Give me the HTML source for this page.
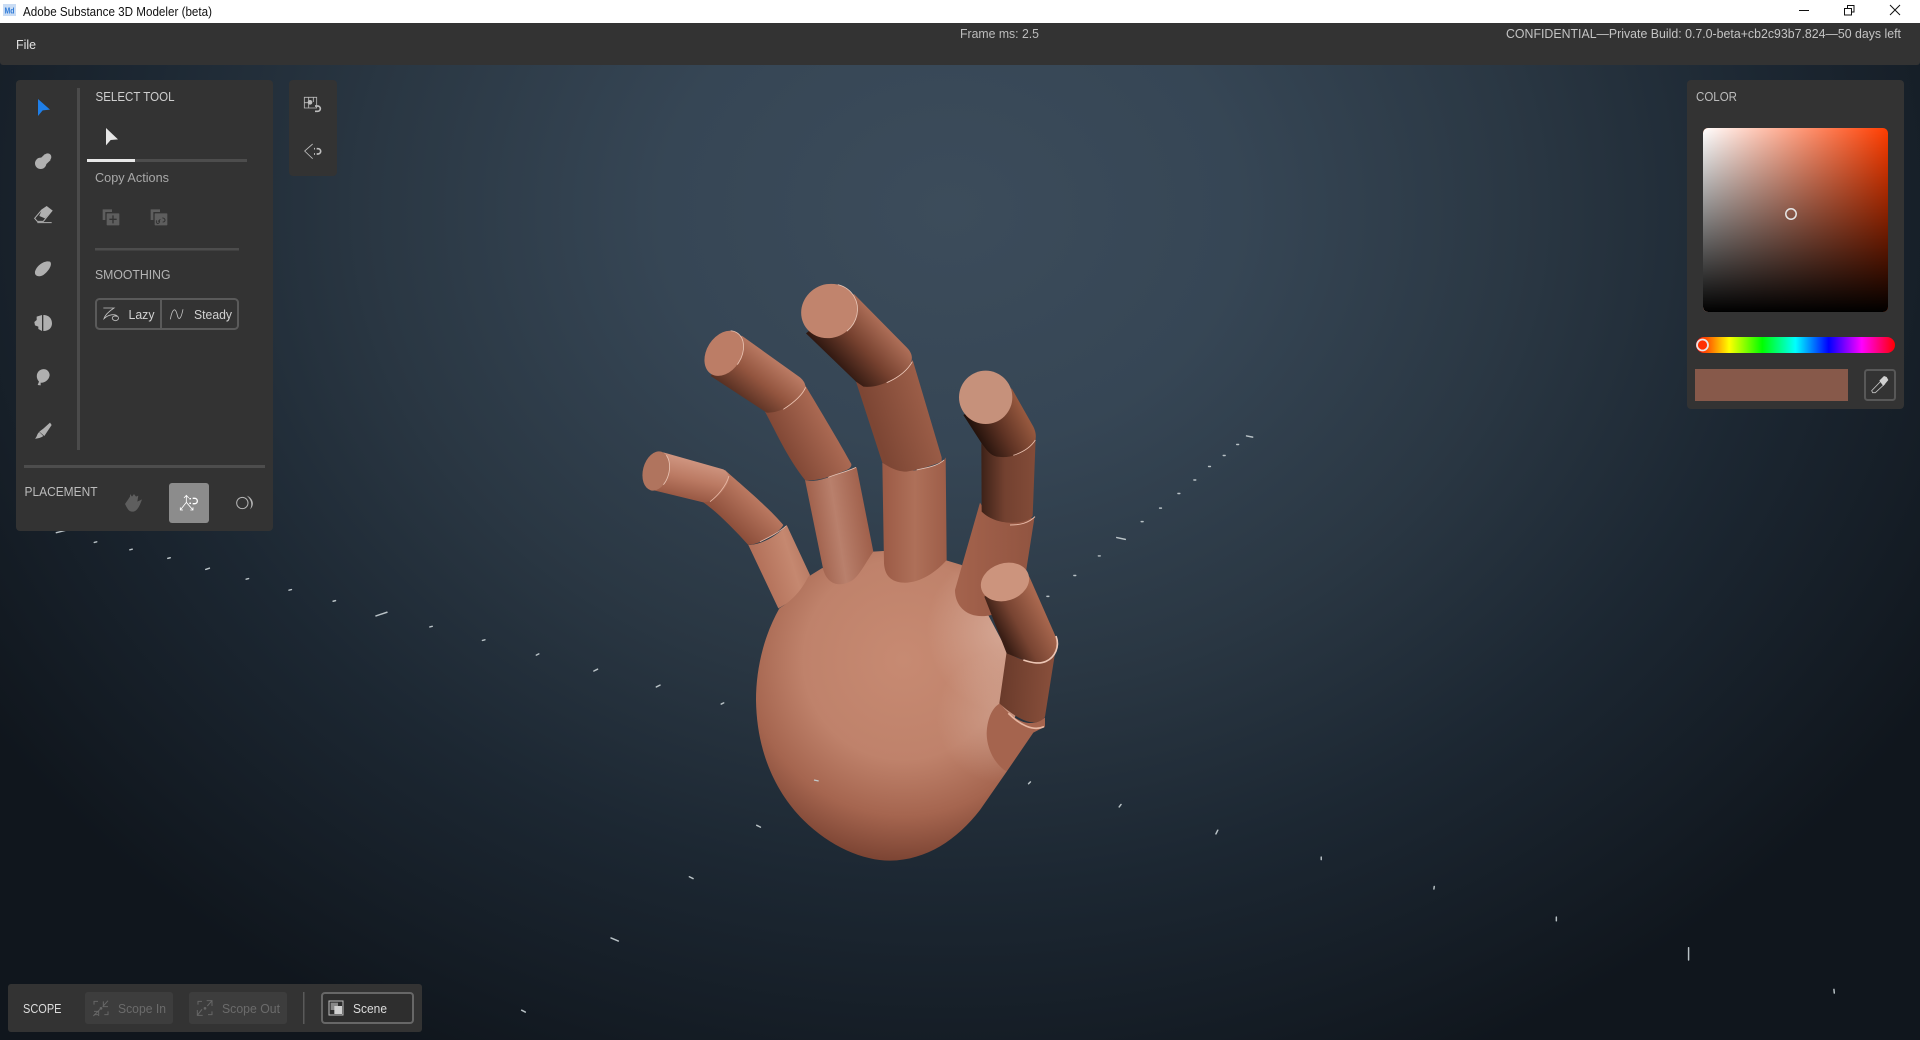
<!DOCTYPE html>
<html lang="en"><head><meta charset="utf-8"><title>Adobe Substance 3D Modeler (beta)</title>
<style>
html,body{margin:0;padding:0;background:#111;overflow:hidden}
svg{display:block}
text{font-family:"Liberation Sans",sans-serif;font-size:13px}
</style></head><body>
<svg xmlns="http://www.w3.org/2000/svg" width="1920" height="1040" viewBox="0 0 1920 1040">
<defs>
<radialGradient id="bg" gradientUnits="userSpaceOnUse" cx="950" cy="210" r="1150" gradientTransform="translate(950 210) scale(1 .82) translate(-950 -210)">
<stop offset="0" stop-color="#3c4c5b"/><stop offset=".25" stop-color="#364655"/><stop offset=".5" stop-color="#2a3743"/><stop offset=".72" stop-color="#1c2732"/><stop offset="1" stop-color="#10161d"/>
</radialGradient>
<linearGradient id="w" x1="0" x2="1" y1="0" y2="0"><stop offset="0" stop-color="#fff"/><stop offset="1" stop-color="#fff" stop-opacity="0"/></linearGradient>
<linearGradient id="k" x1="0" x2="0" y1="0" y2="1"><stop offset="0" stop-color="#000" stop-opacity="0"/><stop offset="1" stop-color="#000"/></linearGradient>
<linearGradient id="hue" x1="0" x2="1" y1="0" y2="0"><stop offset="0" stop-color="#f00"/><stop offset=".167" stop-color="#ff0"/><stop offset=".333" stop-color="#0f0"/><stop offset=".5" stop-color="#0ff"/><stop offset=".667" stop-color="#00f"/><stop offset=".833" stop-color="#f0f"/><stop offset="1" stop-color="#f00"/></linearGradient>
<radialGradient id="palm" gradientUnits="userSpaceOnUse" cx="490" cy="360" r="600"><stop offset="0" stop-color="#c78a72"/><stop offset=".5" stop-color="#bf826b"/><stop offset=".78" stop-color="#a5654f"/><stop offset="1" stop-color="#7d4534"/></radialGradient>
<radialGradient id="palmH" gradientUnits="userSpaceOnUse" cx="810" cy="270" r="250"><stop offset="0" stop-color="#e6c4b5" stop-opacity=".6"/><stop offset="1" stop-color="#e6c4b5" stop-opacity="0"/></radialGradient>
<radialGradient id="palmH2" gradientUnits="userSpaceOnUse" cx="790" cy="530" r="200"><stop offset="0" stop-color="#dcb6a5" stop-opacity=".5"/><stop offset="1" stop-color="#dcb6a5" stop-opacity="0"/></radialGradient>
<linearGradient id="f1a" gradientUnits="userSpaceOnUse" x1="215" y1="570" x2="190" y2="680"><stop offset="0" stop-color="#cf9580"/><stop offset=".5" stop-color="#bb7a63"/><stop offset="1" stop-color="#9a5a45"/></linearGradient>
<linearGradient id="f1b" gradientUnits="userSpaceOnUse" x1="400" y1="670" x2="320" y2="760"><stop offset="0" stop-color="#bd7b63"/><stop offset="1" stop-color="#8d4f3b"/></linearGradient>
<linearGradient id="f1c" gradientUnits="userSpaceOnUse" x1="400" y1="900" x2="560" y2="850"><stop offset="0" stop-color="#b06d56"/><stop offset=".7" stop-color="#c58870"/><stop offset="1" stop-color="#b87a63"/></linearGradient>
<linearGradient id="f2a" gradientUnits="userSpaceOnUse" x1="470" y1="260" x2="360" y2="400"><stop offset="0" stop-color="#bf7f68"/><stop offset=".5" stop-color="#93553f"/><stop offset="1" stop-color="#4e2a1e"/></linearGradient>
<linearGradient id="f2b" gradientUnits="userSpaceOnUse" x1="640" y1="450" x2="480" y2="540"><stop offset="0" stop-color="#b06e57"/><stop offset="1" stop-color="#7e4533"/></linearGradient>
<linearGradient id="f2c" gradientUnits="userSpaceOnUse" x1="570" y1="800" x2="760" y2="770"><stop offset="0" stop-color="#9c5c47"/><stop offset=".45" stop-color="#b9806c"/><stop offset="1" stop-color="#9c5b46"/></linearGradient>
<linearGradient id="f3a" gradientUnits="userSpaceOnUse" x1="790" y1="150" x2="640" y2="290"><stop offset="0" stop-color="#b2725b"/><stop offset=".5" stop-color="#76412f"/><stop offset="1" stop-color="#27130d"/></linearGradient>
<linearGradient id="f3b" gradientUnits="userSpaceOnUse" x1="930" y1="400" x2="760" y2="460"><stop offset="0" stop-color="#9d5f49"/><stop offset="1" stop-color="#7d4634"/></linearGradient>
<linearGradient id="f3c" gradientUnits="userSpaceOnUse" x1="790" y1="800" x2="980" y2="800"><stop offset="0" stop-color="#9c5b46"/><stop offset=".5" stop-color="#ae7059"/><stop offset="1" stop-color="#9d5d48"/></linearGradient>
<linearGradient id="f4a" gradientUnits="userSpaceOnUse" x1="1210" y1="420" x2="1060" y2="500"><stop offset="0" stop-color="#97593f"/><stop offset=".5" stop-color="#5f3324"/><stop offset="1" stop-color="#1c0e09"/></linearGradient>
<linearGradient id="f4b" gradientUnits="userSpaceOnUse" x1="1085" y1="640" x2="1240" y2="640"><stop offset="0" stop-color="#3e2218"/><stop offset=".45" stop-color="#734130"/><stop offset="1" stop-color="#824b38"/></linearGradient>
<linearGradient id="f4c" gradientUnits="userSpaceOnUse" x1="1020" y1="830" x2="1230" y2="830"><stop offset="0" stop-color="#a3624c"/><stop offset="1" stop-color="#925541"/></linearGradient>
<linearGradient id="tha" gradientUnits="userSpaceOnUse" x1="900" y1="190" x2="770" y2="260"><stop offset="0" stop-color="#a9684f"/><stop offset=".6" stop-color="#784432"/><stop offset="1" stop-color="#3a1e15"/></linearGradient>
<linearGradient id="thb" gradientUnits="userSpaceOnUse" x1="785" y1="440" x2="945" y2="450"><stop offset="0" stop-color="#6a3b2b"/><stop offset="1" stop-color="#8a503c"/></linearGradient>
</defs>

<rect width="1920" height="1040" fill="url(#bg)"/>

<!-- ground ticks -->
<g transform="scale(1.2245)" stroke="#b9c2c6" stroke-width="1.200" stroke-linecap="round" fill="none">
<path d="M46 435l8-2M77 443l2-.5M106 449l2-.5M137 456l2-.5M168 465l3-1M201 473l2-.5M236 482l2-.5M272 491l2-.5M307 503l9-3M351 512l2-.5M394 523l2-.5M438 535l2-1M485 548l3-1.500M536 561l3-1.500M589 575l2-1"/>
<path d="M855 487h1.500M877 470h1.500M897 454h1.500M912 439l7 1.500M932 426h1.500M947 415h1.500M962 403h1.500M975 392h1.500M987 381h1.500M999 372h1.500M1010 363h1.500M1018 356l5 1"/>
<path d="M426 825l3 1.500M499 766l6 2.500M563 716l3 1.500M618 674l3 1.500"/>
<path d="M840 640l1.500-1.500M914 659l1.500-2M993 681l1.500-3M1079 702v-2M1171 726l.3-2M1271 752v-3M1379 784v-10M1498 811l-.3-3"/>
</g>

<!-- finger 1 (behind palm) -->
<g transform="translate(620 270) scale(.33333)">
<path d="M500 765L570 915L545 975L475 1015L385 825C420 825 470 800 500 765Z" fill="url(#f1c)"/>
<path d="M315 600C335 620 440 705 490 765C480 785 430 820 385 825C340 775 290 725 250 697Z" fill="url(#f1b)"/>
<path d="M130 547L310 598C330 610 328 625 322 640C310 665 285 695 250 697L105 662Z" fill="url(#f1a)"/>
<path d="M327 618C318 650 290 680 270 695M498 768C480 785 450 800 420 815" fill="none" stroke="#e8b9a6" stroke-width="2.500"/>
<ellipse cx="108" cy="603" rx="39" ry="60" transform="rotate(15 108 603)" fill="#b0745e"/>
<ellipse cx="108" cy="603" rx="39" ry="60" transform="rotate(15 108 603)" fill="none" stroke="#e8c3b3" stroke-width="2.500" pathLength="100" stroke-dasharray="30 70" stroke-dashoffset="19"/>
</g>

<!-- palm -->
<g transform="translate(740 540) scale(.33333)">
<path d="M118 205C70 290 48 390 48 480C50 640 110 760 190 840C270 920 370 962 450 962C560 960 650 900 720 810L800 695L830 500L800 330L665 75L615 60L430 33L400 35L245 85L205 110C180 160 150 185 118 205Z" fill="url(#palm)"/>
<path d="M118 205C70 290 48 390 48 480C50 640 110 760 190 840C270 920 370 962 450 962C560 960 650 900 720 810L800 695L830 500L800 330L665 75L615 60L430 33L400 35L245 85L205 110C180 160 150 185 118 205Z" fill="url(#palmH)"/>
<path d="M118 205C70 290 48 390 48 480C50 640 110 760 190 840C270 920 370 962 450 962C560 960 650 900 720 810L800 695L830 500L800 330L665 75L615 60L430 33L400 35L245 85L205 110C180 160 150 185 118 205Z" fill="url(#palmH2)"/>
</g>

<!-- fingers 2,3,4 over palm -->
<g transform="translate(620 270) scale(.33333)">
<!-- finger 2 -->
<path d="M710 592L760 845C735 880 715 925 690 935C650 955 620 935 610 900L555 630C590 640 630 620 710 592Z" fill="url(#f2c)"/>
<path d="M555 345C600 420 660 520 694 582C695 590 690 595 680 600C640 615 600 635 555 630C500 560 470 490 435 425C490 425 540 380 555 345Z" fill="url(#f2b)"/>
<path d="M365 197L540 322C560 340 558 352 550 368C530 400 480 430 440 428L272 318Z" fill="url(#f2a)"/>
<path d="M557 352C545 380 515 402 490 418M708 592C680 605 650 612 625 622" fill="none" stroke="#ecc4b3" stroke-width="2.500"/>
<ellipse cx="312" cy="250" rx="52" ry="73" transform="rotate(32 312 250)" fill="#bc7d66"/>
<ellipse cx="312" cy="250" rx="52" ry="73" transform="rotate(32 312 250)" fill="none" stroke="#e9c3b2" stroke-width="2.500" pathLength="100" stroke-dasharray="32 68" stroke-dashoffset="30"/>
<!-- finger 3 -->
<path d="M977 562L980 870C950 905 900 940 850 938C815 935 795 920 792 880L787 578C830 605 880 607 910 595C935 590 965 585 977 562Z" fill="url(#f3c)"/>
<path d="M878 270L965 562L965 575C930 590 890 600 860 605C830 605 805 590 787 578L708 335C790 350 850 320 878 270Z" fill="url(#f3b)"/>
<path d="M702 72L860 232C880 252 880 272 865 290C835 325 780 355 730 350L708 335L558 190Z" fill="url(#f3a)"/>
<path d="M877 275C860 305 830 325 800 338M972 570C950 590 920 592 890 600" fill="none" stroke="#eecabb" stroke-width="2.500"/>
<ellipse cx="628" cy="123" rx="86" ry="80" transform="rotate(-30 628 123)" fill="#c1846d"/>
<ellipse cx="628" cy="123" rx="86" ry="80" transform="rotate(-30 628 123)" fill="none" stroke="#e8c5b6" stroke-width="2.500" pathLength="100" stroke-dasharray="34 66" stroke-dashoffset="12"/>
<!-- finger 4 -->
<path d="M1080 698L1005 960C1005 1015 1050 1050 1115 1035L1200 1020L1243 745L1100 730Z" fill="url(#f4c)"/>
<path d="M1084 520L1247 505L1238 738C1220 765 1130 770 1085 725Z" fill="url(#f4b)"/>
<path d="M1245 740C1225 760 1200 765 1170 765" fill="none" stroke="#e6b7a4" stroke-width="3"/>
<path d="M1175 355L1240 470C1250 490 1250 510 1240 520C1210 555 1170 565 1130 560C1110 555 1100 540 1085 520L1030 435Z" fill="url(#f4a)"/>
<path d="M1246 510C1230 535 1205 548 1180 556" fill="none" stroke="#e8bfae" stroke-width="2.500"/>
<circle cx="1097" cy="382" r="80" fill="#c6917b"/>
</g>

<!-- thumb -->
<g transform="translate(740 540) scale(.33333)">
<path d="M780 490C820 540 870 570 915 532L915 560L880 578L800 695C760 670 740 620 740 580C742 530 760 500 780 490Z" fill="#a5644e"/>
<path d="M805 520C840 555 880 575 912 560" fill="none" stroke="#e7b6a1" stroke-width="5"/>
<path d="M945 340L915 530C890 565 840 545 778 490L800 335C840 365 890 375 945 340Z" fill="url(#thb)"/>
<path d="M868 110L945 285C960 320 950 350 925 362C890 378 850 360 800 340L733 170Z" fill="url(#tha)"/>
<path d="M948 288C960 320 945 352 918 364C900 372 880 370 850 360" fill="none" stroke="#edc6b5" stroke-width="5"/>
<ellipse cx="795" cy="126" rx="74" ry="56" transform="rotate(-18 795 126)" fill="#cc947d"/>
<path d="M222 720l14 3" stroke="#c2cbcd" stroke-width="4" fill="none"/>
</g>

<!-- title bar -->
<rect width="1920" height="23" fill="#fff"/>
<rect x="3" y="4" width="13" height="12" fill="#c9dcf4"/>
<text x="4.500" y="13.500" style="font-size:8px;font-weight:700" fill="#2f7bd8" textLength="10" lengthAdjust="spacingAndGlyphs">Md</text>
<text x="23" y="16" fill="#111" textLength="189" lengthAdjust="spacingAndGlyphs">Adobe Substance 3D Modeler (beta)</text>
<path d="M1799 10.500h10" stroke="#111" fill="none"/>
<path d="M1844.500 8.500h7v6.500h-7zM1847.500 8v-2.500h6.500v6.500h-2.500" stroke="#111" fill="none"/>
<path d="M1890 5l10 10M1900 5l-10 10" stroke="#111" fill="none"/>

<!-- app bar -->
<path d="M0 23h1920v39a3 3 0 0 1-3 3H3a3 3 0 0 1-3-3z" fill="#333"/>
<text x="16" y="49" fill="#e2e2e2" textLength="20" lengthAdjust="spacingAndGlyphs">File</text>
<text x="960" y="38" fill="#bdbdbd" textLength="79" lengthAdjust="spacingAndGlyphs">Frame ms: 2.5</text>
<text x="1506" y="38" fill="#c4c4c4" textLength="395" lengthAdjust="spacingAndGlyphs">CONFIDENTIAL—Private Build: 0.7.0-beta+cb2c93b7.824—50 days left</text>

<!-- left panel -->
<rect x="16" y="80" width="257" height="451" rx="4" fill="#333"/>
<rect x="77" y="88" width="3" height="362" fill="#4b4b4b"/>
<text x="95.500" y="101" fill="#cfcfcf" textLength="79" lengthAdjust="spacingAndGlyphs">SELECT TOOL</text>
<rect x="87" y="159" width="160" height="3" fill="#4d4d4d"/><rect x="87" y="159" width="48" height="3" fill="#e8e8e8"/>
<text x="95" y="182" fill="#a9a9a9" textLength="74" lengthAdjust="spacingAndGlyphs">Copy Actions</text>
<rect x="95" y="248" width="144" height="2.500" fill="#4d4d4d"/>
<text x="95" y="279" fill="#b4b4b4" textLength="75.500" lengthAdjust="spacingAndGlyphs">SMOOTHING</text>
<rect x="96" y="299" width="142" height="30" rx="3.500" fill="none" stroke="#5a5a5a" stroke-width="2"/>
<rect x="160" y="299" width="2" height="30" fill="#5a5a5a"/>
<text x="128.500" y="319" fill="#d2d2d2" textLength="26" lengthAdjust="spacingAndGlyphs">Lazy</text>
<text x="194" y="319" fill="#d2d2d2" textLength="38" lengthAdjust="spacingAndGlyphs">Steady</text>
<rect x="24" y="465" width="241" height="3" fill="#4d4d4d"/>
<text x="24.500" y="496" fill="#bcbcbc" textLength="73" lengthAdjust="spacingAndGlyphs">PLACEMENT</text>
<rect x="169" y="483" width="40" height="40" rx="3" fill="#8c8c8c"/>

<!-- left icons (zoom-1 coordinates) -->
<g transform="scale(.33333)">
<path d="M114 297L150 329L128 331L114 348Z" fill="#1f7fe8"/>
<path d="M318 384L354 418L332 420L318 436Z" fill="#e6e6e6"/>
<circle cx="122" cy="490" r="17" fill="#b0b0b0"/><circle cx="143" cy="471" r="11" fill="#b0b0b0"/><path d="M118 478L135 462L152 480L135 496Z" fill="#b0b0b0"/>
<path d="M104 655L125 630L140 620L156 632L130 664H112ZM112 668H155" fill="none" stroke="#b0b0b0" stroke-width="3"/>
<path d="M125 630L140 620L156 632L135 655L118 648Z" fill="#b0b0b0"/>
<path d="M105 815C110 795 135 780 150 785C158 792 148 812 130 825C115 833 103 828 105 815Z" fill="#b0b0b0"/>
<path d="M130 945C150 945 156 960 156 970C156 982 148 993 130 993ZM126 945V993L115 987V980L105 976L103 966L110 960V950Z" fill="#b0b0b0"/>
<!-- copy icons -->
<path d="M308 628h28v8h-20v24h-8z" fill="#5e5e5e"/><rect x="320" y="640" width="38" height="36" rx="2" fill="#5e5e5e"/><path d="M339 646v24M328 658h22" stroke="#333" stroke-width="4"/>
<path d="M452 628h28v8h-20v24h-8z" fill="#5e5e5e"/><rect x="464" y="640" width="38" height="36" rx="2" fill="#5e5e5e"/><path d="M474 665l7-7M478 661a7 7 0 0 1-5 10a7 7 0 0 1-3-10M487 654a7 7 0 0 1 8 8a7 7 0 0 1-7 4" stroke="#333" stroke-width="3" fill="none"/>
<!-- lazy / steady -->
<path d="M310 924H342C330 932 315 945 312 956C325 943 345 940 354 950C360 960 345 966 338 958C333 950 345 945 350 950" fill="none" stroke="#c0c0c0" stroke-width="2.500"/>
<path d="M511 958C517 925 526 922 531 942C535 962 542 962 549 928" fill="none" stroke="#c0c0c0" stroke-width="2.500"/>
</g>
<g transform="translate(0 330) scale(.33333)">
<path d="M113 165L117 155C108 145 108 130 118 122C132 112 148 120 149 135C148 150 132 160 122 158L122 166Z" fill="#b0b0b0"/>
<path d="M150 278L155 285L133 318L118 305L130 296ZM118 306L130 318C125 322 115 326 105 326C112 320 110 312 118 306Z" fill="#b0b0b0"/>
<path d="M375 522L390 500V492L396 500L402 492L408 500L415 497L412 515L426 508C420 525 412 545 398 545C385 545 382 535 375 522Z" fill="#5e5e5e"/>
<path d="M559 498V517M559 517L541 540M559 517L579 540M552 504l7-8 7 8M541 532v8h8M579 532v8h-8" stroke="#fff" stroke-width="2.500" fill="none"/>
<path d="M578 505h6a8 8 0 0 1 0 16h-6" stroke="#fff" stroke-width="4" fill="none"/><path d="M568 506h5M568 520h5" stroke="#fff" stroke-width="4"/>
<circle cx="727" cy="519" r="17" fill="none" stroke="#b5b5b5" stroke-width="3"/>
<path d="M740 497C758 503 766 525 750 538C757 525 755 510 740 497Z" fill="#b5b5b5"/>
</g>

<!-- small panel -->
<rect x="289" y="80" width="48" height="96" rx="4" fill="#333"/>
<g transform="translate(270 70) scale(.33333)" fill="none" stroke="#bdbdbd" stroke-width="2.500">
<path d="M103 82h37v32h-37zM103 98h14M116 82v32M130 82v14"/>
<circle cx="120" cy="97" r="7" fill="#bdbdbd" stroke="none"/>
<path d="M135 108h8a8 8 0 0 1 0 16h-8" stroke-width="5"/>
<path d="M128 222L104 243L128 266"/>
<path d="M140 236h4a7 7 0 0 1 0 16h-4" stroke-width="5"/>
<path d="M132 236h3M132 252h3" stroke-width="5"/>
</g>

<!-- color panel -->
<rect x="1687" y="80" width="217" height="329" rx="4" fill="#333"/>
<text x="1696" y="101" fill="#bcbcbc" textLength="41" lengthAdjust="spacingAndGlyphs">COLOR</text>
<rect x="1703" y="128" width="185" height="184" rx="5" fill="#ff3d00"/>
<rect x="1703" y="128" width="185" height="184" rx="5" fill="url(#w)"/>
<rect x="1703" y="128" width="185" height="184" rx="5" fill="url(#k)"/>
<circle cx="1791" cy="214" r="5.200" fill="none" stroke="#e6e6e6" stroke-width="1.500"/>
<rect x="1696" y="337" width="199" height="16" rx="8" fill="url(#hue)"/>
<circle cx="1702.500" cy="345" r="5.500" fill="#ff3000" stroke="#e6e6e6" stroke-width="1.800"/>
<rect x="1695" y="369" width="153" height="32" fill="#87594a"/>
<rect x="1865" y="370" width="30" height="30" rx="2.500" fill="#333" stroke="#585858" stroke-width="2"/>
<g transform="translate(1670 70) scale(.33333)">
<path d="M608 968L605 962L634 932L644 942L616 968Z" fill="none" stroke="#c4c4c4" stroke-width="2.500"/>
<path d="M628 932L642 918L650 921L655 930L640 948Z" fill="#d0d0d0"/>
</g>

<!-- scope bar -->
<rect x="8" y="984" width="414" height="48" rx="3" fill="#333"/>
<text x="23" y="1013" fill="#dcdcdc" textLength="38.500" lengthAdjust="spacingAndGlyphs">SCOPE</text>
<rect x="85" y="992" width="88" height="32" rx="3" fill="#3d3d3d"/>
<rect x="189" y="992" width="98" height="32" rx="3" fill="#3d3d3d"/>
<text x="118" y="1013" fill="#6b6b6b" textLength="48" lengthAdjust="spacingAndGlyphs">Scope In</text>
<text x="222" y="1013" fill="#6b6b6b" textLength="58" lengthAdjust="spacingAndGlyphs">Scope Out</text>
<rect x="303" y="992" width="1.500" height="32" fill="#5a5a5a"/>
<rect x="322" y="993" width="91" height="30" rx="3" fill="#2e2e2e" stroke="#676767" stroke-width="2"/>
<text x="353" y="1013" fill="#dcdcdc" textLength="34" lengthAdjust="spacingAndGlyphs">Scene</text>
<g transform="translate(0 970) scale(.33333)" fill="none" stroke="#666" stroke-width="3">
<path d="M282 104v-10h12M324 124v10h-11M294 134h-12"/>
<path d="M300 118L280 138M308 110l16-18M310 94v16h14M282 124h14v14"/>
<circle cx="303" cy="115" r="4" fill="#666" stroke="none"/>
<path d="M594 104v-10h12M636 124v10h-12"/>
<path d="M606 118L592 136M622 108l14-16M620 92h16v16M592 120v16h16"/>
<circle cx="615" cy="115" r="4" fill="#666" stroke="none"/>
</g>
<g transform="translate(0 970) scale(.33333)">
<rect x="987" y="93" width="42" height="42" fill="none" stroke="#bdbdbd" stroke-width="3"/>
<rect x="992" y="98" width="22" height="22" fill="#888"/>
<rect x="1003" y="108" width="23" height="24" fill="#d0d0d0"/>
</g>
</svg>
</body></html>
